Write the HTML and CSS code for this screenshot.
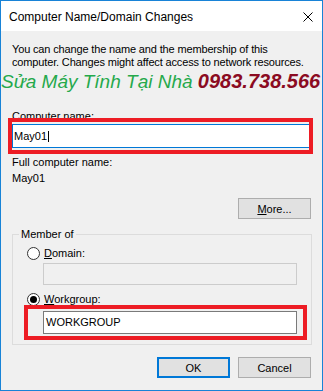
FILE: index.html
```html
<!DOCTYPE html>
<html lang="vi">

<head>
  <meta charset="UTF-8" />
  <meta name="viewport" content="width=device-width, initial-scale=1.0" />
  <title>Computer Name/Domain Changes</title>
  <link rel="stylesheet" href="styles.css">
</head>

<body>
  <div class="window">
    <div class="titlebar">
      <span class="title">Computer Name/Domain Changes</span>
      <svg class="close" width="10" height="10" viewBox="0 0 10 10">
        <path d="M0.5 0.5 L9.5 9.5 M9.5 0.5 L0.5 9.5" stroke="#000" stroke-width="1" fill="none" />
      </svg>
    </div>

    <div class="content">
      <p class="intro">You can change the name and the membership of this<br>computer. Changes might affect access to network resources.</p>
      <p class="promo"><span class="promo-name">Sửa Máy Tính Tại Nhà</span> <span class="promo-phone">0983.738.566</span></p>

      <p class="label name-label"><u>C</u>omputer name:</p>
      <div class="field">
        <div class="textbox focused">May01<span class="caret"></span></div>
        <span class="mark mark-name"></span>
      </div>

      <p class="label full-label">Full computer name:</p>
      <p class="label full-value">May01</p>

      <div class="more-row">
        <button class="btn"><u>M</u>ore...</button>
      </div>

      <fieldset class="group">
        <legend>Member of</legend>
        <div class="option domain-option">
          <span class="radio"></span>
          <span><u>D</u>omain:</span>
        </div>
        <div class="textbox disabled"></div>

        <div class="option workgroup-option">
          <span class="radio checked"></span>
          <span><u>W</u>orkgroup:</span>
        </div>
        <div class="field group-field">
          <div class="textbox plain">WORKGROUP</div>
          <span class="mark mark-group"></span>
        </div>
      </fieldset>

      <div class="actions">
        <button class="btn default">OK</button>
        <button class="btn">Cancel</button>
      </div>
    </div>
  </div>
</body>

</html>
```

FILE: styles.css
```css
body {
  margin: 0;
  padding: 0;
  font-family: "Liberation Sans", Arial, sans-serif;
  font-size: 11px;
  color: #000;
}

p {
  margin: 0;
}

.window {
  width: 323px;
  height: 391px;
  box-sizing: border-box;
  border: 1px solid #1883d7;
  background-color: #f0f0f0;
  overflow: hidden;
}

.titlebar {
  height: 30px;
  background-color: #fff;
  display: flex;
  align-items: center;
  justify-content: space-between;
  padding: 0 9px 0 8px;
}

.title {
  font-size: 12px;
  padding-top: 1px;
}

.close {
  display: block;
  margin-top: 1px;
}

.content {
  padding: 12px 10px 0 11px;
}

.intro {
  line-height: 13px;
  white-space: nowrap;
  letter-spacing: -0.15px;
}

/* advert text stamped over the screenshot */
.promo {
  height: 22px;
  margin-top: 1px;
  margin-left: -11px;
  font-size: 19px;
  line-height: 22px;
  font-style: italic;
  white-space: nowrap;
}

.promo-name {
  color: #25a94b;
}

.promo-phone {
  color: #8b0b22;
  font-size: 20px;
  font-weight: bold;
}

.label {
  line-height: 13px;
}

.name-label {
  margin-top: 18px;
}

.full-label {
  margin-top: 8px;
}

.full-value {
  margin-top: 3px;
}

.field {
  position: relative;
}

.textbox {
  box-sizing: border-box;
  height: 24px;
  line-height: 22px;
  border: 1px solid #7a7a7a;
  background-color: #fff;
  padding-left: 1px;
}

.focused {
  margin-top: 1px;
  border-color: #0078d7;
  display: flex;
  align-items: center;
}

.caret {
  display: inline-block;
  width: 1px;
  height: 11px;
  margin-left: 1px;
  background-color: #000;
}

.disabled {
  margin: 3px 0 0 30px;
  width: 254px;
  height: 22px;
  border-color: #cccccc;
  background-color: #f0f0f0;
}

.plain {
  width: 254px;
  height: 23px;
  line-height: 20px;
  padding-left: 2px;
}

/* red highlight frames drawn over the inputs */
.mark {
  position: absolute;
  border: 4px solid #ed1c24;
  pointer-events: none;
}

.mark-name {
  top: -6px;
  left: -4px;
  right: -1px;
  bottom: -6px;
}

.mark-group {
  top: -6px;
  left: -19px;
  right: -10px;
  bottom: -6px;
}

.more-row {
  display: flex;
  justify-content: flex-end;
  margin-top: 13px;
  padding-right: 1px;
}

.btn {
  width: 73px;
  height: 21px;
  padding: 0;
  font-family: inherit;
  font-size: 11px;
  color: #000;
  background-color: #e1e1e1;
  border: 1px solid #adadad;
  border-radius: 0;
}

.btn.default {
  border: 2px solid #0078d7;
}

.group {
  margin: 9px 0 0 0;
  padding: 0 0 10px 0;
  border: 1px solid #dcdcdc;
  min-inline-size: auto;
}

.group legend {
  margin-left: 6px;
  padding: 0 2px;
  line-height: 13px;
}

.group-field {
  margin: 5px 0 0 30px;
  width: 254px;
}

.option {
  display: flex;
  align-items: center;
  height: 13px;
  line-height: 13px;
  gap: 4px;
  margin-left: 14px;
}

.domain-option {
  margin-top: 6px;
}

.workgroup-option {
  margin-top: 8px;
}

.radio {
  box-sizing: border-box;
  width: 13px;
  height: 13px;
  border: 1px solid #333;
  border-radius: 50%;
  background-color: #fff;
  display: flex;
  align-items: center;
  justify-content: center;
}

.radio.checked::after {
  content: "";
  width: 7px;
  height: 7px;
  border-radius: 50%;
  background-color: #000;
}

.actions {
  display: flex;
  justify-content: flex-end;
  gap: 8px;
  margin-top: 12px;
  padding-right: 1px;
}
```
